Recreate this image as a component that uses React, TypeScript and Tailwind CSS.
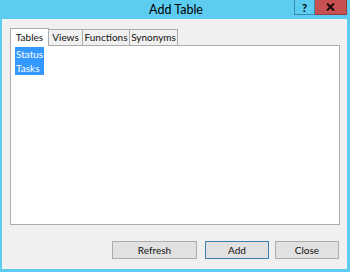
const tabs = [
  { label: 'Tables', w: 'w-[39px]' },
  { label: 'Views', w: 'w-[35px]' },
  { label: 'Functions', w: 'w-[48px]' },
  { label: 'Synonyms', w: 'w-[49px]' },
];
const items = ['Status', 'Tasks'];

export default function App() {
  return (
    <div
      className="w-[350px] h-[272px] bg-[#5ccdf1] flex flex-col overflow-hidden"
      style={{ fontFamily: 'Lato, "Open Sans", sans-serif' }}
    >
      {/* title bar */}
      <div className="h-[19px] flex items-start relative">
        <div className="flex-1 text-center text-[12.5px] leading-[20px] pl-[2px] text-black">Add Table</div>
        <div className="absolute right-[3px] top-0 flex">
          <div className="w-[21px] h-[15px] border border-[#3a8ab0] border-t-0 bg-[#5ccdf1] flex items-center justify-center text-[11px] font-bold leading-none text-black">
            ?
          </div>
          <div className="w-[32px] h-[15px] bg-[#c75050] border border-[#9b3c3c] border-t-0 border-l-0 flex items-center justify-center">
            <svg width="9" height="8" viewBox="0 0 9 8">
              <path d="M1 0.5 L8 7.5 M8 0.5 L1 7.5" stroke="#1a0a0a" strokeWidth="2" />
            </svg>
          </div>
        </div>
      </div>

      {/* client area */}
      <div className="flex-1 ml-[2px] mr-[3px] mb-[3px] bg-[#f0f0f0] flex flex-col px-[8px] pt-[9px] text-[10px] text-[#111]">
        <div className="flex items-end h-[18px] relative z-10">
          {tabs.map((t, i) =>
            i === 0 ? (
              <div
                key={t.label}
                className={`${t.w} h-[18px] text-center whitespace-nowrap bg-white border border-[#acacac] border-b-0 leading-[17px]`}
              >
                {t.label}
              </div>
            ) : (
              <div
                key={t.label}
                className={`${t.w} h-[16px] text-center whitespace-nowrap bg-[#f0f0f0] border border-[#acacac] border-b-0 -ml-px leading-[15px] mb-px`}
              >
                {t.label}
              </div>
            )
          )}
        </div>
        <div className="w-[330px] h-[180px] -mt-px bg-white border border-[#acacac] pt-[1px] pl-[4px]">
          <div className="inline-flex flex-col">
            {items.map((it) => (
              <div key={it} className="bg-[#3399ff] text-white pl-[1px] pr-[1px] h-[14px] leading-[14px]">
                {it}
              </div>
            ))}
          </div>
        </div>

        <div className="flex justify-end mt-[16px]">
          <button className="w-[85px] h-[18px] bg-[#e1e1e1] border border-[#adadad] leading-[16px] text-[10px]">
            Refresh
          </button>
          <button className="w-[64px] h-[18px] ml-[8px] bg-[#e1e1e1] border border-[#3c7fb1] leading-[16px] text-[10px]">
            Add
          </button>
          <button className="w-[64px] h-[18px] ml-[6px] bg-[#e1e1e1] border border-[#adadad] leading-[16px] text-[10px]">
            Close
          </button>
        </div>
      </div>
    </div>
  );
}
